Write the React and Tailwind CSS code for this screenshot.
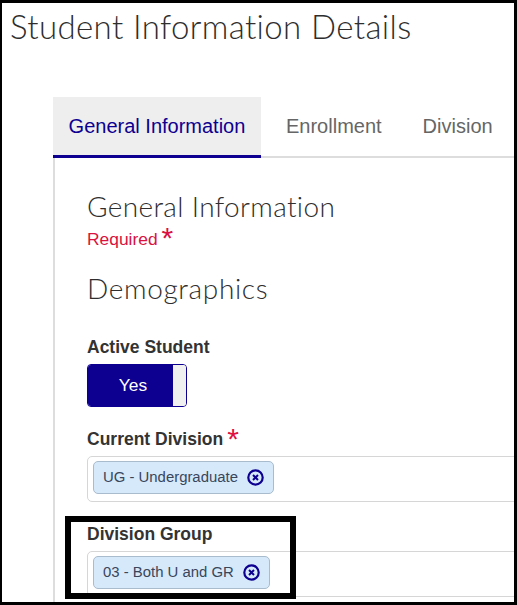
const sans = "font-['Liberation_Sans',Arial,sans-serif]";
const head = "font-['Lato','Open_Sans',sans-serif] font-light";

function CloseIcon() {
  return (
    <svg width="17" height="17" viewBox="0 0 17 17" fill="none" className="shrink-0">
      <circle cx="8.5" cy="8.5" r="7.2" stroke="#0d0091" strokeWidth="2.2" />
      <path d="M6 6l5 5M11 6l-5 5" stroke="#0d0091" strokeWidth="2" />
    </svg>
  );
}

function Chip({ label }) {
  return (
    <div className="flex h-[33px] items-center gap-[9px] rounded-[5px] border border-[#a9bccd] bg-[#d6e9fb] pl-[9px] pr-[9px]">
      <span className="text-[14.9px] text-[#39465a]">{label}</span>
      <CloseIcon />
    </div>
  );
}

function Field({ label, required, chip, className }) {
  return (
    <div className={className}>
      <div className="flex h-[20px] items-center gap-[4px]">
        <span className="text-[17.5px] font-bold text-[#333333]">{label}</span>
        {required && <span className="mt-[-1px] text-[30px] leading-[20px] text-[#e0103f]">*</span>}
      </div>
      <div className="mt-[7px] flex h-[46px] w-[500px] items-start rounded-l-[5px] border border-[#d6d6d6] pl-[5px] pt-[4px]">
        <Chip label={chip} />
      </div>
    </div>
  );
}

export default function App() {
  return (
    <div className={`relative h-[605px] w-[517px] overflow-hidden border-t-[3px] border-r-[3px] border-b-[3px] border-l-[2px] border-black bg-white ${sans}`}>
      <h1 className={`ml-[8px] mt-[4px] h-[90px] text-[33px] leading-[38px] tracking-[0.38px] text-[#2e2e2e] ${head}`}>
        Student Information Details
      </h1>

      <div className="ml-[51px] flex h-[61px] items-stretch border-b-2 border-[#dddddd] text-[20px]">
        <div className="mb-[-2px] flex w-[208px] items-center justify-center border-b-[3px] border-[#0d0091] bg-[#eeeeee] text-[#0d0091]">
          General Information
        </div>
        <div className="ml-[25px] flex items-center pb-[1px] text-[#666666]">Enrollment</div>
        <div className="ml-[41px] flex items-center pb-[1px] text-[#666666]">Division</div>
      </div>

      <div className="ml-[51px] h-[500px] border-l-2 border-[#dddddd] pl-[32px] pt-[30px]">
        <h2 className={`h-[36px] text-[28px] leading-[36px] tracking-[0.35px] text-[#2e2e2e] ${head}`}>General Information</h2>
        <div className="mt-[3px] flex h-[24px] items-center gap-[4px] text-[17.4px] text-[#d9123f]">
          <span>Required</span>
          <span className="mt-[-3px] text-[30px] leading-[20px]">*</span>
        </div>
        <h2 className={`mt-[19px] h-[36px] text-[28px] leading-[36px] tracking-[0.65px] text-[#2e2e2e] ${head}`}>Demographics</h2>

        <div className="mt-[31px] flex h-[20px] items-center text-[17.5px] font-bold text-[#333333]">Active Student</div>
        <div className="mt-[7px] flex h-[43px] w-[100px] overflow-hidden rounded-[4px] border border-[#0d0091]">
          <div className="flex w-[85px] items-center justify-center bg-[#0d0091] pl-[5px] text-[17.4px] text-white">Yes</div>
          <div className="flex-1 bg-[#f0f0f0]" />
        </div>

        <Field className="mt-[22px]" label="Current Division" required chip="UG - Undergraduate" />
        <Field className="mt-[22px]" label="Division Group" chip="03 - Both U and GR" />
      </div>

      <div className="pointer-events-none absolute left-[63px] top-[513px] h-[83px] w-[231px] border-[6px] border-black" />
    </div>
  );
}
